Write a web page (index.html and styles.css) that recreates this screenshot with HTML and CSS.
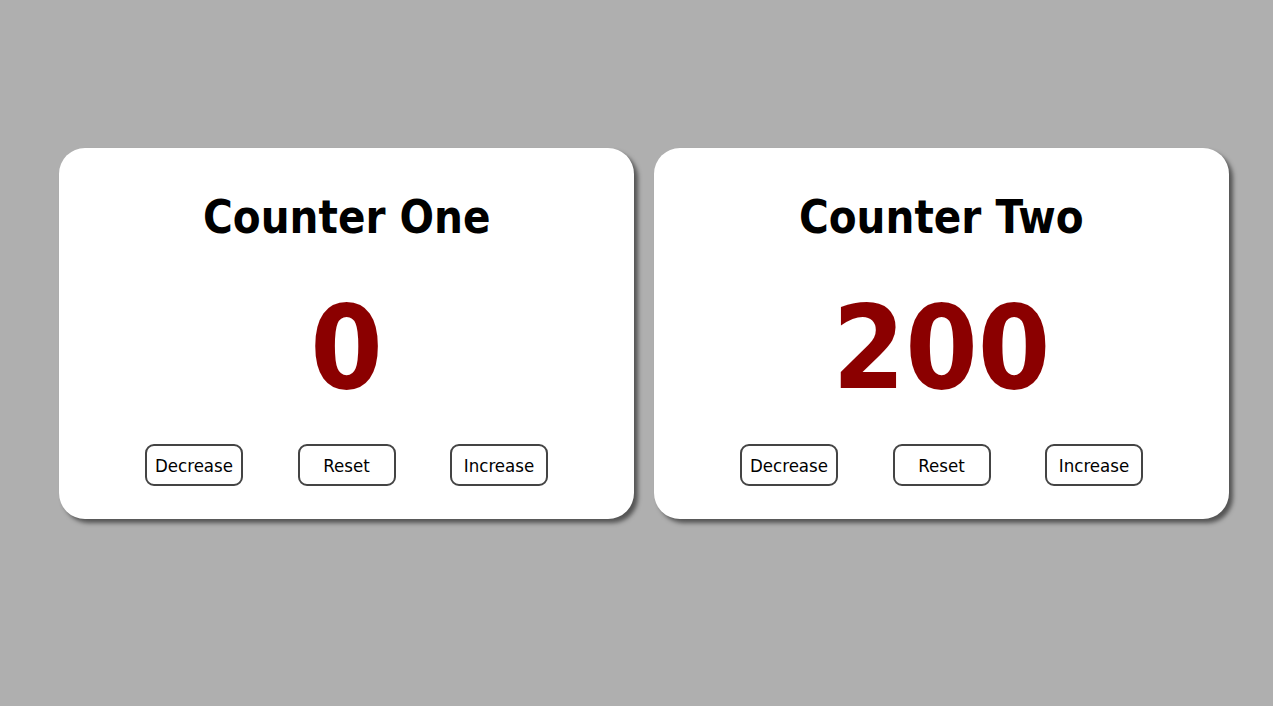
FILE: index.html
```html
<!DOCTYPE html>
<html>
<head>
<meta charset="utf-8">
<link rel="stylesheet" href="styles.css">
</head>
<body>
<main class="page">
  <section class="card">
    <h1 class="title">Counter One</h1>
    <div class="count">0</div>
    <div class="actions">
      <button class="btn">Decrease</button>
      <button class="btn">Reset</button>
      <button class="btn">Increase</button>
    </div>
  </section>
  <section class="card">
    <h1 class="title">Counter Two</h1>
    <div class="count">200</div>
    <div class="actions">
      <button class="btn">Decrease</button>
      <button class="btn">Reset</button>
      <button class="btn">Increase</button>
    </div>
  </section>
</main>
</body>
</html>
```
FILE: styles.css
```css
html, body {
  margin: 0;
  padding: 0;
  background: #afafaf;
  height: 100%;
  font-family: "DejaVu Sans Condensed", "DejaVu Sans", sans-serif;
}
.page {
  display: flex;
  gap: 20px;
  padding: 148px 0 0 59px;
}
.card {
  width: 575px;
  height: 371px;
  box-sizing: border-box;
  background: #fff;
  border-radius: 26px;
  box-shadow: 4px 4px 4px #555;
  display: flex;
  flex-direction: column;
  align-items: center;
}
.title {
  margin: 41px 0 0;
  font-size: 47px;
  font-weight: bold;
  line-height: 56px;
  color: #000;
  transform: scaleX(0.96);
}
.count {
  margin-top: 43px;
  font-size: 116px;
  font-weight: bold;
  line-height: 120px;
  color: #8b0000;
}
.actions {
  margin-top: 36px;
  display: flex;
  gap: 54.5px;
}
.btn {
  width: 98px;
  height: 42px;
  background: #fff;
  border: 2px solid #444;
  border-radius: 9px;
  font-family: inherit;
  font-size: 18.5px;
  color: #000;
  padding: 0;
}
```
